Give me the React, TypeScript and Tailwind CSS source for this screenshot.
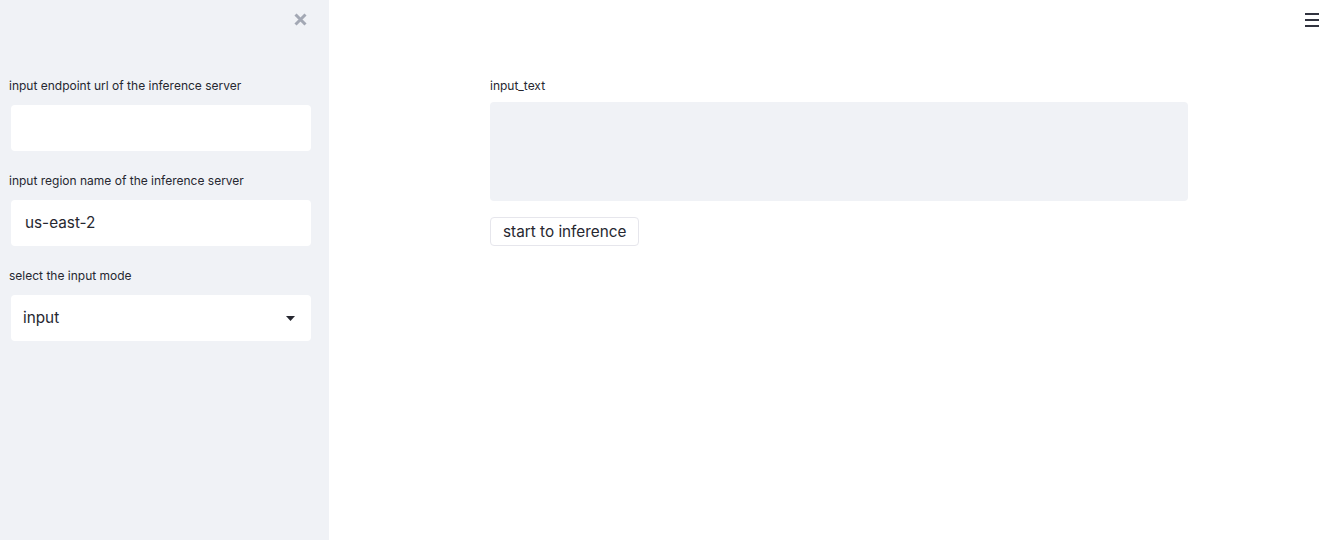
export default function App() {
  const labelCls = "h-[28px] leading-[18px] text-[12px] text-[#262730]"
  const boxCls =
    "ml-[2px] w-[300px] h-[46px] bg-white rounded-[4px] flex items-center text-[15.3px] text-[#262730]"

  return (
    <div
      className="flex w-[1331px] h-[540px] bg-white"
      style={{ fontFamily: '"Inter", "Liberation Sans", sans-serif' }}
    >
      {/* sidebar */}
      <div className="w-[329px] h-full bg-[#f0f2f6] flex flex-col pl-[9px]">
        <div className="h-[77px] flex justify-end pr-[22px] pt-[13px]">
          <svg width="13" height="13" viewBox="0 0 13 13">
            <path
              d="M1.5 1.5 L11.5 11.5 M11.5 1.5 L1.5 11.5"
              stroke="#a3a8b4"
              strokeWidth="3"
            />
          </svg>
        </div>

        <div className="flex flex-col">
          <div className="h-[95px]">
            <div className={labelCls + " h-[27px]"}>input endpoint url of the inference server</div>
            <div className={boxCls}></div>
          </div>
          <div className="h-[95px]">
            <div className={labelCls}>input region name of the inference server</div>
            <div className={boxCls + " pl-[14px]"}>us-east-2</div>
          </div>
          <div className="h-[95px]">
            <div className={labelCls}>select the input mode</div>
            <div className={boxCls + " pl-[12px] pr-[16px] justify-between"}>
              <span>input</span>
              <svg width="9" height="5" viewBox="0 0 9 5">
                <path d="M0 0 L9 0 L4.5 5 Z" fill="#262730" />
              </svg>
            </div>
          </div>
        </div>
      </div>

      {/* main */}
      <div className="flex-1 flex flex-col relative">
        <div className="absolute right-[12px] top-[13px] flex flex-col gap-[4px]">
          <div className="w-[14px] h-[2px] bg-[#31333f]" />
          <div className="w-[14px] h-[2px] bg-[#31333f]" />
          <div className="w-[14px] h-[2px] bg-[#31333f]" />
        </div>

        <div className="pl-[161px] pt-[76px] w-[859px]">
          <div className="h-[26px] leading-[20px] text-[12px] text-[#262730]">input_text</div>
          <div className="w-[698px] h-[99px] bg-[#f0f2f6] rounded-[4px]"></div>
          <button className="mt-[16px] h-[29px] px-[12px] border border-[#e6e6ec] rounded-[4px] bg-white text-[15.3px] text-[#262730] leading-none">
            start to inference
          </button>
        </div>
      </div>
    </div>
  )
}
